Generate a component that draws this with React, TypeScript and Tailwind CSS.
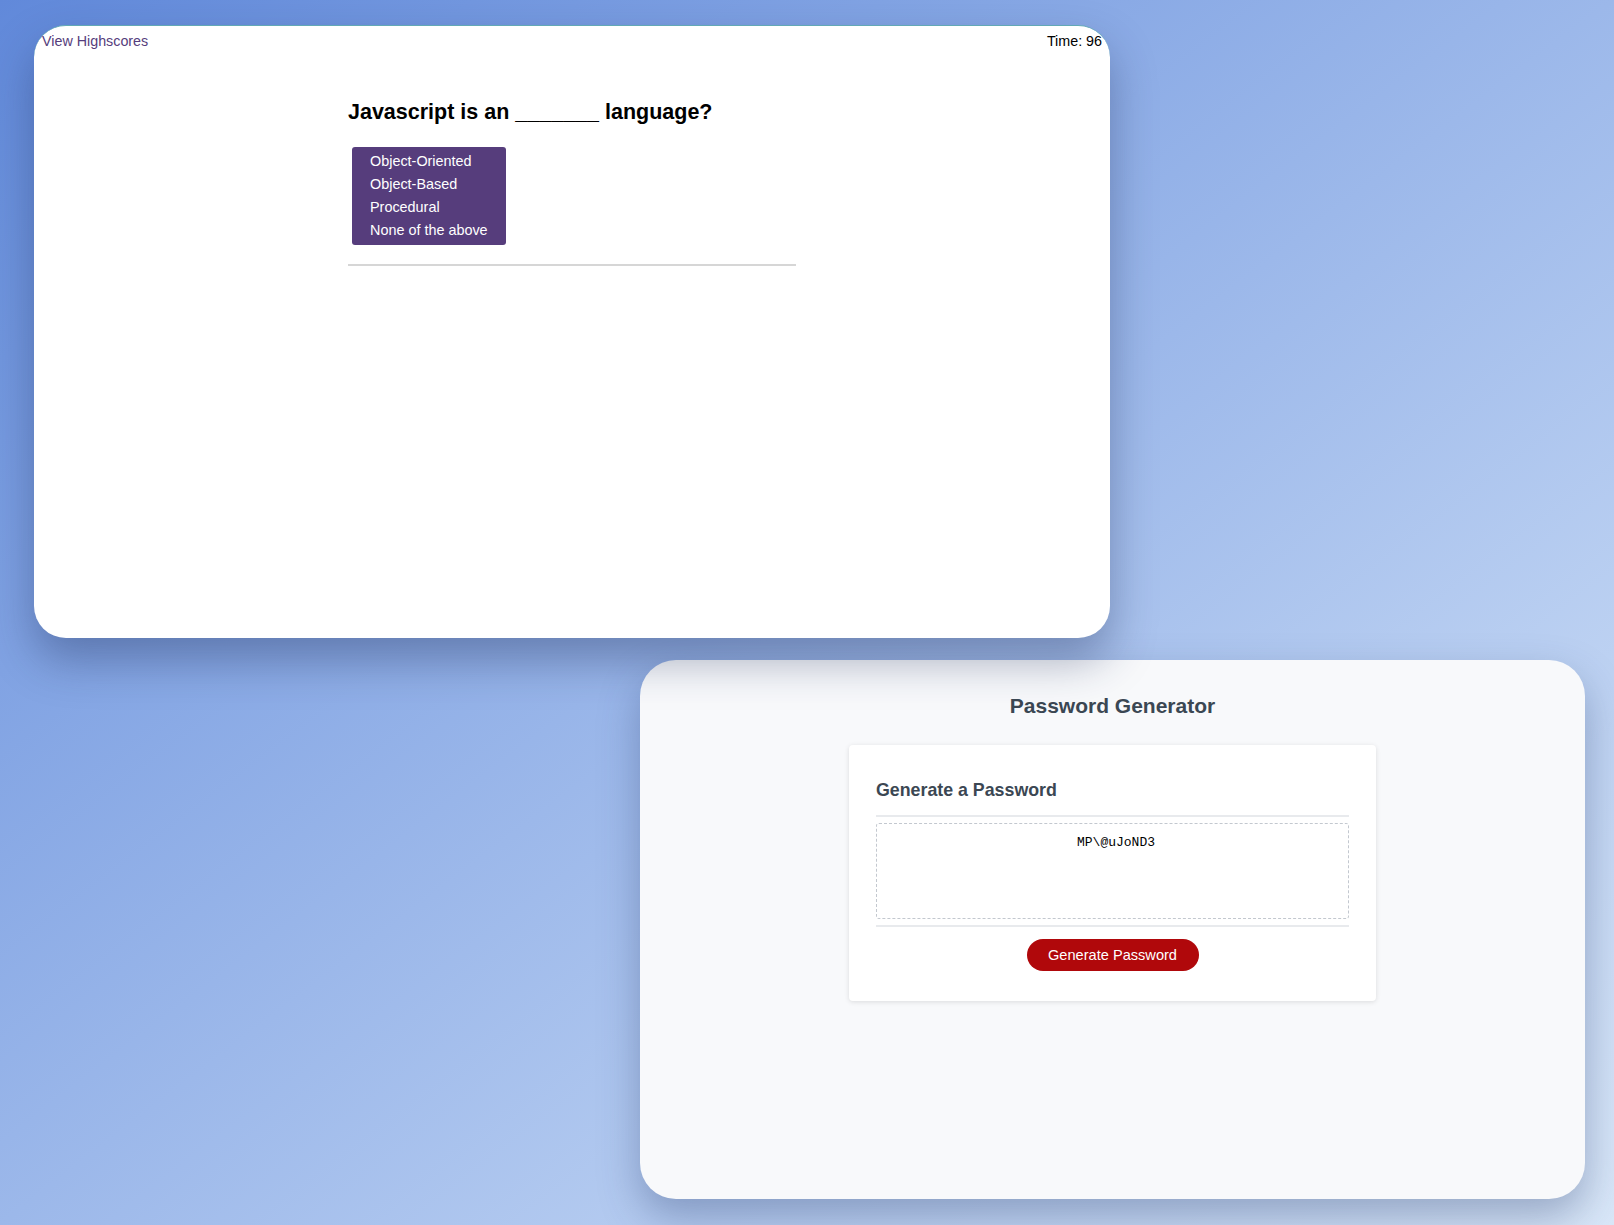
export default function App() {
  const options = ["Object-Oriented", "Object-Based", "Procedural", "None of the above"];

  return (
    <div
      className="relative h-[1225px] w-full overflow-hidden bg-linear-to-br from-[#6189da] via-[#9cb8ea] to-[#d9e7f8]"
      style={{ fontFamily: '"Liberation Sans", Arial, Helvetica, sans-serif' }}
    >
      {/* Password generator window */}
      <div className="absolute left-[640px] top-[660px] w-[945px] h-[539px] rounded-[36px] bg-[#f8f9fb] shadow-[0_18px_40px_rgba(40,60,110,0.35)] pt-[33px]">
        <h1 className="text-center text-[21px] leading-[25px] font-bold text-[#3b4753]">Password Generator</h1>

        <div className="mx-auto mt-[27px] w-[527px] rounded-[4px] bg-white px-[27px] pt-[34px] pb-[30px] shadow-[0_1px_5px_rgba(0,0,0,0.12)]">
          <h2 className="text-[17.8px] leading-[22px] font-bold text-[#3b4753]">Generate a Password</h2>
          <div className="mt-[14px] h-[2px] bg-[#e8eaed]"></div>

          <div className="mt-[6px] h-[96px] rounded-[3px] border border-dashed border-[#c3c8cf] pt-[5px] pl-[7px] text-center">
            <span
              className="text-[13px] leading-[16px] text-black"
              style={{ fontFamily: '"Liberation Mono", "Courier New", monospace' }}
            >
              MP\@uJoND3
            </span>
          </div>

          <div className="mt-[6px] h-[2px] bg-[#e8eaed]"></div>

          <div className="mt-[12px] flex justify-center">
            <button className="h-[32px] w-[172px] rounded-full bg-[#b0080b] pt-px text-[14.6px] text-white">
              Generate Password
            </button>
          </div>
        </div>
      </div>

      {/* Quiz window */}
      <div className="absolute left-[34px] top-[25px] z-10 w-[1076px] h-[613px] rounded-[32px] border-t border-[#62a9b6] bg-white px-2 pt-[7px] shadow-[0_22px_45px_rgba(30,45,90,0.38)]">
        <div className="flex justify-between text-[14.3px] leading-[17px]">
          <a className="text-[#563d7c]">View Highscores</a>
          <span className="text-black">Time: 96</span>
        </div>

        <div className="mx-auto mt-[50px] w-[448px]">
          <h2 className="text-[21.5px] leading-[25px] font-bold text-black whitespace-nowrap">
            Javascript is an _______ language?
          </h2>

          <ul className="mt-[22px] ml-1 w-[154px] rounded-[3px] bg-[#563d7c] px-[18px] py-[3px]">
            {options.map((option) => (
              <li key={option} className="text-[14.4px] leading-[23px] text-white whitespace-nowrap">
                {option}
              </li>
            ))}
          </ul>

          <div className="mt-[19px] h-[2px] bg-[#d6d6d6]"></div>
        </div>
      </div>
    </div>
  );
}
